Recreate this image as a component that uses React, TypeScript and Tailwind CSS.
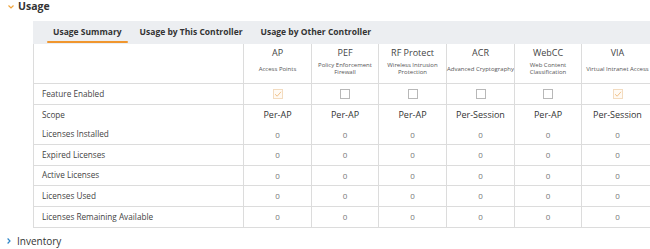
import React from 'react';

type Col = { name: string; sub: React.ReactNode; checked: boolean; scope: string };

const cols: Col[] = [
  { name: 'AP', sub: 'Access Points', checked: true, scope: 'Per-AP' },
  { name: 'PEF', sub: <>Policy Enforcement<br />Firewall</>, checked: false, scope: 'Per-AP' },
  { name: 'RF Protect', sub: <>Wireless Intrusion<br />Protection</>, checked: false, scope: 'Per-AP' },
  { name: 'ACR', sub: 'Advanced Cryptography', checked: false, scope: 'Per-Session' },
  { name: 'WebCC', sub: <>Web Content<br />Classification</>, checked: false, scope: 'Per-AP' },
  { name: 'VIA', sub: 'Virtual Intranet Access', checked: true, scope: 'Per-Session' },
];

const grid = 'grid grid-cols-[209px_68px_67px_68px_68px_67px_72px]';

const countRows: { label: string; h: string }[] = [
  { label: 'Licenses Installed', h: 'h-[20px] border-b' },
  { label: 'Expired Licenses', h: 'h-[21px] border-b' },
  { label: 'Active Licenses', h: 'h-[20px] border-b' },
  { label: 'Licenses Used', h: 'h-[21px] border-b' },
  { label: 'Licenses Remaining Available', h: 'h-[21px] border-b' },
];

const Checkbox = ({ checked }: { checked: boolean }) =>
  checked ? (
    <span className="w-[10px] h-[10px] border border-[#f3dcc0] bg-[#fffaf4] flex items-center justify-center">
      <svg width="8" height="8" viewBox="0 0 8 8">
        <path d="M1 4.2 L3.2 6.2 L7 1.8" fill="none" stroke="#f2c48c" strokeWidth="1" />
      </svg>
    </span>
  ) : (
    <span className="w-[10px] h-[10px] border border-[#b8b8b8] bg-white" />
  );

export default function App() {
  return (
    <div className="w-[650px] h-[249px] bg-white overflow-hidden font-['Open_Sans',sans-serif] text-[#333]">
      <div className="flex items-center h-[13px] pl-[8px]">
        <svg width="6" height="4" viewBox="0 0 6 4" className="mr-[4px] mt-[1px]">
          <path d="M0.5 0.5 L3 3 L5.5 0.5" fill="none" stroke="#f0a43c" strokeWidth="1.2" />
        </svg>
        <span className="text-[10.5px] font-bold leading-none">Usage</span>
      </div>

      <div className="ml-[33px] mt-[8px]">
        <div className="h-[23px] bg-[#eceef1] flex items-stretch pl-[14px] gap-[6px]">
          <div className="relative px-[6px] flex items-center text-[8.5px] font-bold">
            Usage Summary
            <span className="absolute left-0 right-0 bottom-[1px] h-[2px] rounded-full bg-[#f0962e]" />
          </div>
          <div className="px-[6px] flex items-center text-[8.5px] font-bold">Usage by This Controller</div>
          <div className="px-[6px] flex items-center text-[8.5px] font-bold">Usage by Other Controller</div>
        </div>

        <div className="border-l border-[#dcdcdc]">
          <div className={`${grid} h-[40px] border-b border-[#dcdcdc]`}>
            <div />
            {cols.map((c) => (
              <div key={c.name} className="border-l border-[#dcdcdc] flex flex-col items-center pt-[3px]">
                <div className="text-[9px] leading-[12px] text-[#444]">{c.name}</div>
                <div className="mt-[2px] h-[16px] flex items-center text-center text-[6px] leading-[7px] text-[#555] whitespace-nowrap">
                  <span>{c.sub}</span>
                </div>
              </div>
            ))}
          </div>

          <div className={`${grid} h-[21px] border-b border-[#dcdcdc]`}>
            <div className="pl-[8px] flex items-center text-[8.2px] text-[#444]">Feature Enabled</div>
            {cols.map((c) => (
              <div key={c.name} className="border-l border-[#dcdcdc] flex items-center justify-center">
                <Checkbox checked={c.checked} />
              </div>
            ))}
          </div>

          <div className={`${grid} h-[20px]`}>
            <div className="pl-[8px] flex items-center text-[8.2px] text-[#444]">Scope</div>
            {cols.map((c) => (
              <div key={c.name} className="border-l border-[#dcdcdc] flex items-center justify-center text-[9px] text-[#333]">
                {c.scope}
              </div>
            ))}
          </div>

          {countRows.map((r) => (
            <div key={r.label} className={`${grid} ${r.h} border-[#dcdcdc]`}>
              <div className="pl-[8px] flex items-center text-[8.2px] text-[#444] whitespace-nowrap">{r.label}</div>
              {cols.map((c) => (
                <div key={c.name} className="border-l border-[#dcdcdc] flex items-center justify-center text-[8px] text-[#777]">
                  0
                </div>
              ))}
            </div>
          ))}
        </div>
      </div>

      <div className="flex items-center h-[12px] mt-[7px] pl-[7px]">
        <svg width="4" height="6" viewBox="0 0 4 6" className="mr-[6px]">
          <path d="M0.6 0.5 L3 3 L0.6 5.5" fill="none" stroke="#2f86c8" strokeWidth="1.2" />
        </svg>
        <span className="text-[10px] leading-none text-[#333]">Inventory</span>
      </div>
    </div>
  );
}
